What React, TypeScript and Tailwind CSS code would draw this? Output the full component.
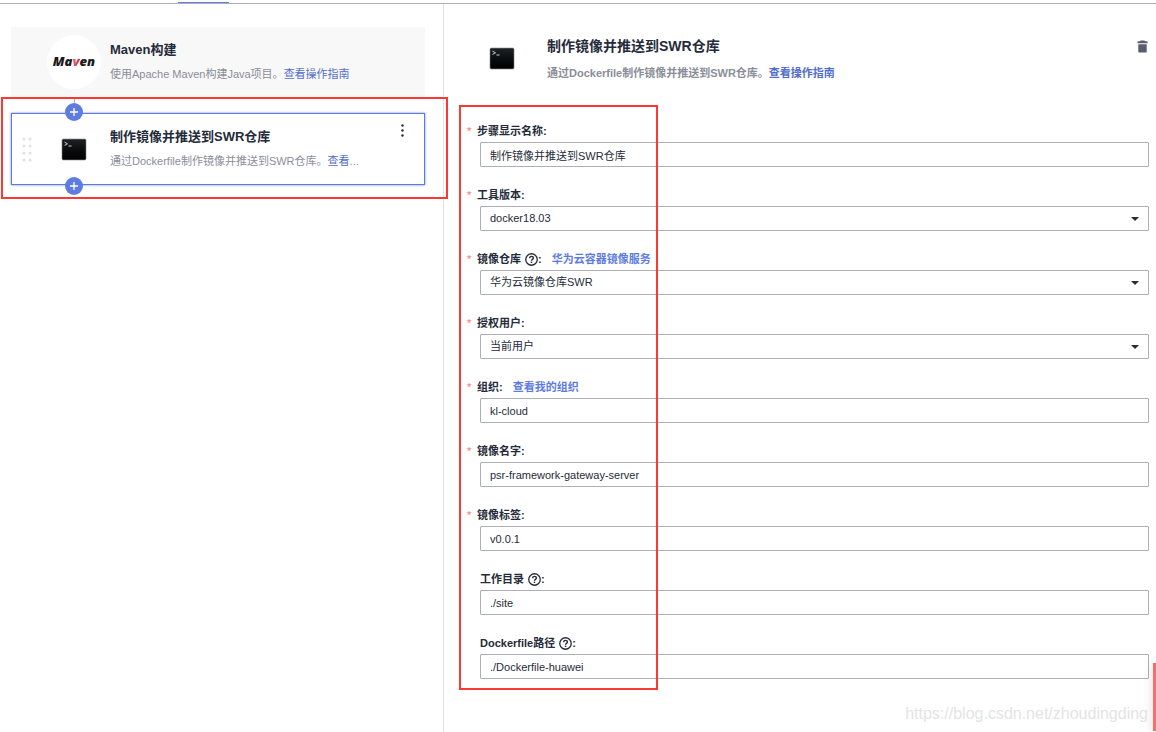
import { useState } from "react";
import type { ReactNode } from "react";

type Field = {
  id: string;
  label: string;
  value: string;
  required?: boolean;
  help?: boolean;
  link?: string;
  options?: string[];
};

const FIELDS: Field[] = [
  { id: "name", label: "步骤显示名称", value: "制作镜像并推送到SWR仓库", required: true },
  { id: "version", label: "工具版本", value: "docker18.03", required: true, options: ["docker18.03"] },
  {
    id: "registry",
    label: "镜像仓库",
    value: "华为云镜像仓库SWR",
    required: true,
    help: true,
    link: "华为云容器镜像服务",
    options: ["华为云镜像仓库SWR"],
  },
  { id: "user", label: "授权用户", value: "当前用户", required: true, options: ["当前用户"] },
  { id: "org", label: "组织", value: "kl-cloud", required: true, link: "查看我的组织" },
  { id: "image", label: "镜像名字", value: "psr-framework-gateway-server", required: true },
  { id: "tag", label: "镜像标签", value: "v0.0.1", required: true },
  { id: "workdir", label: "工作目录", value: "./site", help: true },
  { id: "dockerfile", label: "Dockerfile路径", value: "./Dockerfile-huawei", help: true },
];

function TerminalIcon() {
  return (
    <svg width="26" height="23" viewBox="0 0 26 23" aria-hidden="true">
      <defs>
        <linearGradient id="term" x1="0" y1="0" x2="0" y2="1">
          <stop offset="0" stopColor="#1d2224" />
          <stop offset="0.6" stopColor="#070a0b" />
          <stop offset="1" stopColor="#000" />
        </linearGradient>
      </defs>
      <rect x="0.5" y="0.5" width="25" height="22" rx="2" fill="#b4b4b4" />
      <rect x="1.2" y="1.2" width="23.6" height="20.6" rx="1" fill="url(#term)" />
      <path d="M3.5 4.2l3 1.6-3 1.6M7.5 8h3" fill="none" stroke="#c9cdcf" strokeWidth="1" />
    </svg>
  );
}

function HelpIcon() {
  return (
    <svg width="13" height="13" viewBox="0 0 14 14" fill="none" stroke="#252b3a" aria-hidden="true">
      <circle cx="7" cy="7" r="6.2" strokeWidth="1.4" />
      <path d="M5 5.7c0-2.8 4-2.6 4-.2 0 1.3-2 1.4-2 2.9" strokeWidth="1.5" />
      <path d="M7 9.3v1.5" strokeWidth="1.6" />
    </svg>
  );
}

function TrashIcon() {
  return (
    <svg width="11" height="13" viewBox="0 0 11 13" fill="#575d6c" aria-hidden="true">
      <path d="M3 1.2Q3 .4 3.8.4h3.4q.8 0 .8.8h1.6q1 0 1 1.2v.8H.4v-.8q0-1.2 1-1.2z" />
      <path d="M1.3 4.2h8.4v7.2q0 1.2-1.2 1.2h-6q-1.2 0-1.2-1.2z" />
    </svg>
  );
}

function MavenLogo() {
  return (
    <div className="flex size-[54px] shrink-0 items-center justify-center rounded-full bg-white font-['Open_Sans',sans-serif] text-[13px] font-extrabold italic text-[#1a1a1a]">
      <span>
        Ma
        <span className="bg-gradient-to-r from-[#e8622c] to-[#c2227e] bg-clip-text text-transparent">v</span>
        en
      </span>
    </div>
  );
}

function AddButton({ className }: { className: string }) {
  return (
    <button
      type="button"
      aria-label="添加步骤"
      className={`absolute left-[53px] z-10 flex size-[18px] items-center justify-center rounded-full bg-[#5e7ce0] ${className}`}
    >
      <svg width="8" height="8" viewBox="0 0 8 8" stroke="#fff" strokeWidth="1.3" aria-hidden="true">
        <path d="M4 0v8M0 4h8" />
      </svg>
    </button>
  );
}

function Link({ children }: { children: ReactNode }) {
  return (
    <a href="#" className="text-[#526ecc]">
      {children}
    </a>
  );
}

function FormRow({ field }: { field: Field }) {
  const [value, setValue] = useState(field.value);
  const control =
    "block h-[25px] w-full appearance-none rounded-[1px] border border-[#adb0b8] bg-white px-[9px] text-[11px] text-[#252b3a] focus:border-[#5e7ce0] focus:outline-none";

  return (
    <div className="flex flex-col gap-px">
      <div className={`flex h-5 items-center font-bold ${field.required ? "" : "pl-[13px]"}`}>
        {field.required && <span className="w-[10px] font-normal text-[#f66f6a]">*</span>}
        <label htmlFor={field.id} className="flex items-center">
          {field.label}
          {field.help && (
            <span className="ml-1">
              <HelpIcon />
            </span>
          )}
          :
        </label>
        {field.link && (
          <a href="#" className="ml-[10px] text-[#5e7ce0]">
            {field.link}
          </a>
        )}
      </div>
      <div className="relative ml-[13px]">
        {field.options ? (
          <>
            <select id={field.id} value={value} onChange={(e) => setValue(e.target.value)} className={control}>
              {field.options.map((option) => (
                <option key={option}>{option}</option>
              ))}
            </select>
            <svg
              width="8"
              height="4"
              viewBox="0 0 8 4"
              className="pointer-events-none absolute right-[10px] top-[11px]"
              aria-hidden="true"
            >
              <path d="M0 0h8L4 4z" fill="#252b3a" />
            </svg>
          </>
        ) : (
          <input id={field.id} type="text" value={value} onChange={(e) => setValue(e.target.value)} className={control} />
        )}
      </div>
    </div>
  );
}

export default function App() {
  return (
    <div className="relative flex min-h-screen flex-col bg-white font-['Liberation_Sans','Noto_Sans_CJK_SC',sans-serif] text-[11px] text-[#252b3a]">
      <div className="h-1 border-b border-[#adb0b8] pl-[178px]">
        <div className="h-[3px] w-[51px] border-b border-[#5e7ce0]" />
      </div>

      <div className="flex flex-1">
        {/* Step list */}
        <aside className="w-[444px] shrink-0 border-r border-[#dfe1e6] pl-[11px] pr-[18px] pt-[23px]">
          <div className="flex h-[70px] items-center bg-[#f8f8f8] pl-9">
            <MavenLogo />
            <div className="ml-[9px]">
              <h3 className="text-[13px] font-bold leading-6">Maven构建</h3>
              <p className="leading-6 text-[#8a8e99]">
                使用Apache Maven构建Java项目。<Link>查看操作指南</Link>
              </p>
            </div>
          </div>
          <div className="ml-[63px] h-4 w-px bg-[#adb0b8]" />

          <div className="relative flex h-[72px] items-center border border-[#5e7ce0] pl-[10px] shadow-[0_0_2px_#5e7ce0]">
            <AddButton className="-top-[11px]" />
            <AddButton className="-bottom-[11px]" />
            <svg width="10" height="25" viewBox="0 0 10 25" fill="#dfe1e6" aria-hidden="true">
              {[2, 9, 16, 23].map((y) => (
                <g key={y}>
                  <circle cx="2" cy={y} r="1.5" />
                  <circle cx="8" cy={y} r="1.5" />
                </g>
              ))}
            </svg>
            <div className="ml-[15px] flex size-[54px] shrink-0 items-center justify-center">
              <TerminalIcon />
            </div>
            <div className="ml-[9px]">
              <h3 className="text-[13px] font-bold leading-6">制作镜像并推送到SWR仓库</h3>
              <p className="leading-6 text-[#8a8e99]">
                通过Dockerfile制作镜像并推送到SWR仓库。<Link>查看</Link>...
              </p>
            </div>
            <button type="button" aria-label="更多" className="mb-auto ml-auto mr-5 mt-[10px]">
              <svg width="3" height="13" viewBox="0 0 3 13" fill="#252b3a" aria-hidden="true">
                <circle cx="1.5" cy="1.5" r="1.2" />
                <circle cx="1.5" cy="6.5" r="1.2" />
                <circle cx="1.5" cy="11.5" r="1.2" />
              </svg>
            </button>
            <div className="pointer-events-none absolute -bottom-[15px] -left-[11px] -right-[24px] -top-[17px] z-20 border-2 border-[#fa3934]" />
          </div>
        </aside>

        {/* Step settings */}
        <main className="min-w-0 flex-1 pl-[23px] pr-[7px] pt-[27px]">
          <header className="flex pl-2 pr-px">
            <div className="flex size-[54px] shrink-0 items-center justify-center">
              <TerminalIcon />
            </div>
            <div className="ml-[18px]">
              <h2 className="text-sm font-bold leading-[30px]">制作镜像并推送到SWR仓库</h2>
              <p className="font-bold leading-6 text-[#8a8e99]">
                通过Dockerfile制作镜像并推送到SWR仓库。<Link>查看操作指南</Link>
              </p>
            </div>
            <button type="button" aria-label="删除" className="mb-auto ml-auto mt-[9px]">
              <TrashIcon />
            </button>
          </header>

          <form className="relative mt-9 flex flex-col gap-[18px]">
            {FIELDS.map((field) => (
              <FormRow key={field.id} field={field} />
            ))}
            <div className="pointer-events-none absolute -bottom-[11px] -left-2 -top-4 w-[199px] border-2 border-[#fa3934]" />
          </form>
        </main>
      </div>

      <div className="absolute bottom-px right-0 h-[68px] w-[3px] bg-[#f66f6a] shadow-[0_0_10px_rgba(0,0,0,0.25)]" />
      <p className="absolute bottom-[6px] right-2 text-base text-[#e4e4e4]">https://blog.csdn.net/zhoudingding</p>
    </div>
  );
}
